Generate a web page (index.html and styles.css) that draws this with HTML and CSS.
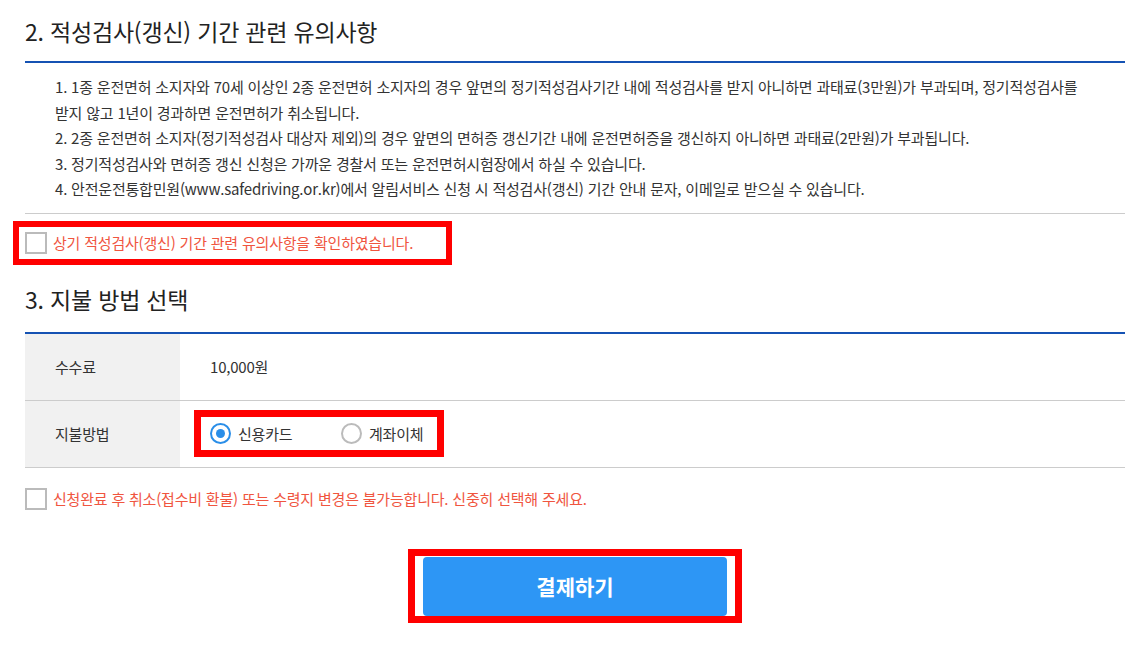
FILE: index.html
```html
<!DOCTYPE html>
<html lang="ko">
<head>
    <meta charset="UTF-8">
    <meta name="viewport" content="width=device-width, initial-scale=1.0">
    <title>적성검사(갱신) 결제</title>
    <link rel="stylesheet" href="styles.css">
</head>
<body>

<div class="container">
    <h2 class="sec-title">2. 적성검사(갱신) 기간 관련 유의사항</h2>
    <div class="notice">
        <p>1. 1종 운전면허 소지자와 70세 이상인 2종 운전면허 소지자의 경우 앞면의 정기적성검사기간 내에 적성검사를 받지 아니하면 과태료(3만원)가 부과되며, 정기적성검사를 받지 않고 1년이 경과하면 운전면허가 취소됩니다.</p>
        <p>2. 2종 운전면허 소지자(정기적성검사 대상자 제외)의 경우 앞면의 면허증 갱신기간 내에 운전면허증을 갱신하지 아니하면 과태료(2만원)가 부과됩니다.</p>
        <p>3. 정기적성검사와 면허증 갱신 신청은 가까운 경찰서 또는 운전면허시험장에서 하실 수 있습니다.</p>
        <p>4. 안전운전통합민원(www.safedriving.or.kr)에서 알림서비스 신청 시 적성검사(갱신) 기간 안내 문자, 이메일로 받으실 수 있습니다.</p>
    </div>

    <label class="agree agree-top mark">
        <input type="checkbox" name="agreeNotice">
        <span class="check"></span>
        <span>상기 적성검사(갱신) 기간 관련 유의사항을 확인하였습니다.</span>
    </label>

    <h2 class="sec-title pay-title">3. 지불 방법 선택</h2>
    <table class="pay-table">
        <tr>
            <th>수수료</th>
            <td>10,000원</td>
        </tr>
        <tr>
            <th>지불방법</th>
            <td>
                <div class="radios mark">
                    <label class="radio">
                        <input type="radio" name="payType" value="card" checked>
                        <span class="dot"></span>
                        <span>신용카드</span>
                    </label>
                    <label class="radio">
                        <input type="radio" name="payType" value="bank">
                        <span class="dot"></span>
                        <span>계좌이체</span>
                    </label>
                </div>
            </td>
        </tr>
    </table>

    <label class="agree agree-bottom">
        <input type="checkbox" name="agreeCancel">
        <span class="check"></span>
        <span>신청완료 후 취소(접수비 환불) 또는 수령지 변경은 불가능합니다. 신중히 선택해 주세요.</span>
    </label>

    <div class="btn-area">
        <div class="btn-wrap mark">
            <button type="button" class="btn-pay">결제하기</button>
        </div>
    </div>
</div>

</body>
</html>
```

FILE: styles.css
```css
body {
    margin: 0;
    font-family: "Noto Sans CJK KR", "Noto Sans", sans-serif;
    color: #333;
    background: #fff;
}
.container {
    width: 1100px;
    margin: 0 25px;
    padding-bottom: 30px;
}
.sec-title {
    margin: 0;
    padding: 15px 0 14px;
    font-size: 23px;
    font-weight: normal;
    letter-spacing: -0.2px;
    line-height: 32px;
    color: #222;
    border-bottom: 2px solid #1552b3;
}
.pay-title {
    padding: 13px 0 17px;
}
.notice {
    padding: 11px 30px 11px;
    border-bottom: 1px solid #ccc;
    font-size: 15px;
    letter-spacing: -0.2px;
    line-height: 25.5px;
    word-break: keep-all;
}
.notice p {
    margin: 0;
}

/* 빨간 표시 박스 */
.mark {
    outline: 6px solid #ff0000;
}

.agree {
    display: flex;
    align-items: center;
    gap: 6px;
    font-size: 15px;
    letter-spacing: -0.2px;
    color: #f0553f;
    cursor: pointer;
}
.agree input,
.radio input {
    display: none;
}
.check {
    width: 22px;
    height: 22px;
    box-sizing: border-box;
    border: 2px solid #bbb;
    background: #fff;
    flex: none;
}
.agree-top {
    width: 427px;
    box-sizing: border-box;
    margin: 13px 0 11px -6px;
    padding: 5px 6px;
}
.agree-bottom {
    margin-top: 20px;
}

.pay-table {
    width: 100%;
    border-collapse: collapse;
    font-size: 15px;
    letter-spacing: -0.2px;
}
.pay-table th,
.pay-table td {
    height: 66px;
    padding: 0;
    border-bottom: 1px solid #ccc;
    text-align: left;
    font-weight: normal;
}
.pay-table th {
    width: 125px;
    padding-left: 30px;
    background: #f1f1f1;
}
.pay-table td {
    padding-left: 30px;
}

.radios {
    display: inline-flex;
    align-items: center;
    margin-left: -9px;
    padding: 6px 0 6px 9px;
    width: 236px;
    box-sizing: border-box;
    outline-width: 7px;
}
.radio {
    display: flex;
    align-items: center;
    gap: 7px;
    width: 131px;
    cursor: pointer;
}
.radio:last-child {
    width: auto;
}
.dot {
    width: 21px;
    height: 21px;
    box-sizing: border-box;
    border: 2px solid #bbb;
    border-radius: 50%;
    display: flex;
    align-items: center;
    justify-content: center;
}
.radio input:checked + .dot {
    border-color: #2a8ee8;
}
.radio input:checked + .dot::after {
    content: "";
    width: 9px;
    height: 9px;
    border-radius: 50%;
    background: #2a8ee8;
}

.btn-area {
    display: flex;
    justify-content: center;
    margin-top: 46px;
}
.btn-wrap {
    padding: 1px 8px 0;
    outline-width: 7px;
}
.btn-pay {
    display: block;
    width: 304px;
    height: 59px;
    border: none;
    border-radius: 4px;
    background-color: #2d96f5;
    color: #fff;
    font-family: "Noto Sans CJK KR", sans-serif;
    font-size: 21px;
    font-weight: bold;
    cursor: pointer;
}
```
